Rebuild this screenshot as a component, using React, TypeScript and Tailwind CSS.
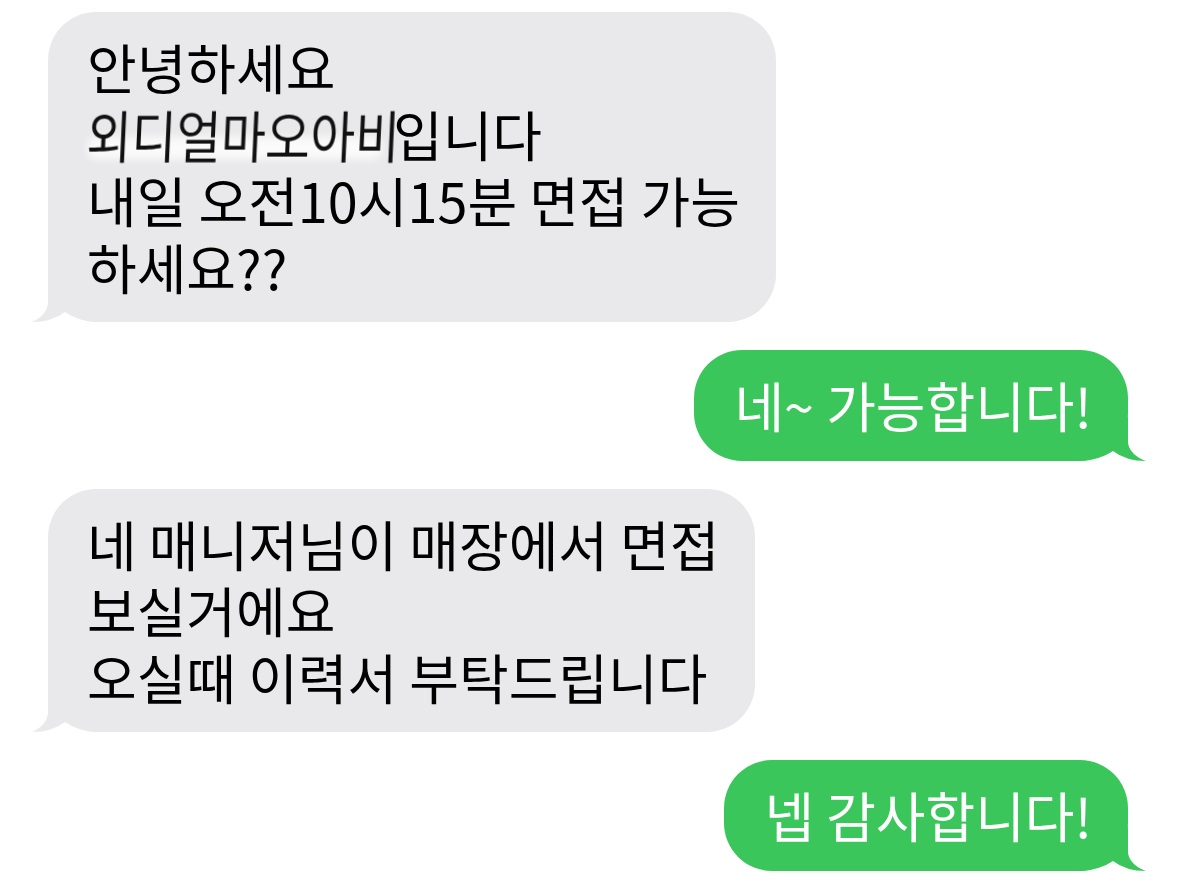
import React from 'react';

type Side = 'in' | 'out';

interface BubbleProps {
  side: Side;
  children: React.ReactNode;
}

function Tail({ side }: { side: Side }) {
  if (side === 'in') {
    return (
      <svg
        className="absolute bottom-0 -left-[16px]"
        width="66"
        height="44"
        viewBox="0 0 66 44"
      >
        <path
          d="M16 0 L16 26 Q14 38 0 44 Q20 44 33 34 Q46 43 66 44 L66 0 Z"
          fill="#e9e9eb"
        />
      </svg>
    );
  }
  return (
    <svg
      className="absolute bottom-0 -right-[18px]"
      width="66"
      height="44"
      viewBox="0 0 66 44"
    >
      <path
        d="M48 0 L48 26 Q50 38 66 44 Q46 44 33 34 Q20 43 0 44 L0 0 Z"
        fill="#3ac65b"
      />
    </svg>
  );
}

function Bubble({ side, children }: BubbleProps) {
  const incoming = side === 'in';
  return (
    <div className={incoming ? 'flex justify-start pl-[48px]' : 'flex justify-end pr-[51px]'}>
      <div
        className={
          incoming
            ? 'relative rounded-[48px] bg-[#e9e9eb] text-black pl-[39px] pr-[36px] py-[22px]'
            : 'relative rounded-[48px] bg-[#3ac65b] text-white pl-[40px] pr-[36px] py-[22px]'
        }
      >
        <Tail side={side} />
        <div className="relative text-[54px] leading-[66.5px] whitespace-pre">{children}</div>
      </div>
    </div>
  );
}

// the sender's name is smudged out in the screenshot
function Smudged({ text }: { text: string }) {
  return (
    <span className="relative inline-block w-[306px] align-top">
      <span className="absolute left-0 right-[10px] bottom-[8px] h-[22px] rounded-full bg-white/80 blur-[4px]" />
      <span className="relative inline-block origin-left scale-x-[0.9] scale-y-[1.04] skew-x-[-3deg] blur-[0.6px] text-[#111]">
        {text}
      </span>
    </span>
  );
}

export default function App() {
  return (
    <div
      className="w-[1179px] h-[884px] bg-white overflow-hidden pt-[12px] flex flex-col gap-[28px]"
      style={{ fontFamily: '"Noto Sans CJK KR", "Noto Sans", sans-serif' }}
    >
      <Bubble side="in">
        안녕하세요
        {'\n'}
        <Smudged text="외디얼마오아비" />
        입니다
        {'\n'}내일 오전10시15분 면접 가능{'\n'}하세요??
      </Bubble>
      <Bubble side="out">네~ 가능합니다!</Bubble>
      <Bubble side="in">
        네 매니저님이 매장에서 면접{'\n'}보실거에요{'\n'}오실때 이력서 부탁드립니다
      </Bubble>
      <Bubble side="out">넵 감사합니다!</Bubble>
    </div>
  );
}
